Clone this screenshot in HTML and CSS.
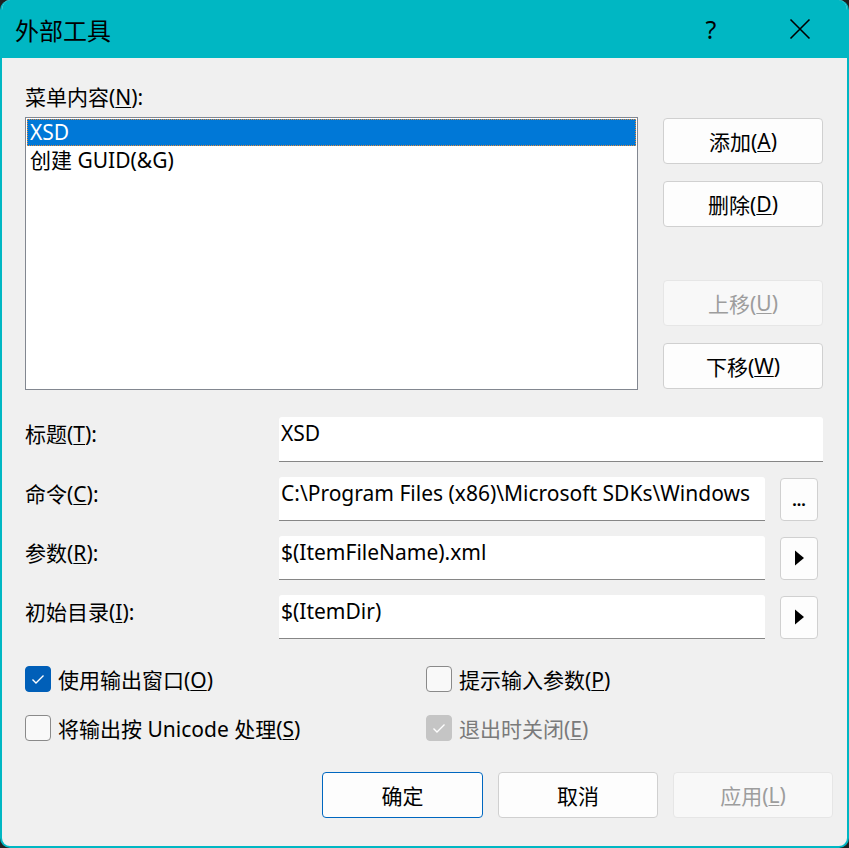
FILE: index.html
```html
<html>
	<head>
		<meta charset="utf-8">
		<title>外部工具</title>
		<link rel="stylesheet" href="styles.css">
	</head>
	<body>
		<div class="dialog">
			<div class="titlebar">
				<span class="title">外部工具</span>
				<span class="help">?</span>
				<span class="close">
					<svg width="22" height="22" viewBox="0 0 22 22"><path d="M1.5 1.5 L20.5 20.5 M20.5 1.5 L1.5 20.5" stroke="#000" stroke-width="1.6" fill="none"/></svg>
				</span>
			</div>

			<div class="content">
				<div class="label">菜单内容(<u>N</u>):</div>

				<div class="menurow">
					<div class="listbox">
						<div class="item selected">XSD</div>
						<div class="item">创建 GUID(&amp;G)</div>
					</div>
					<div class="sidebuttons">
						<button class="btn">添加(<u>A</u>)</button>
						<button class="btn">删除(<u>D</u>)</button>
						<button class="btn disabled spaced">上移(<u>U</u>)</button>
						<button class="btn">下移(<u>W</u>)</button>
					</div>
				</div>

				<div class="fields">
					<div class="label">标题(<u>T</u>):</div>
					<div class="input wide">XSD</div>

					<div class="label">命令(<u>C</u>):</div>
					<div class="input">C:\Program Files (x86)\Microsoft SDKs\Windows</div>
					<button class="btn small dots">...</button>

					<div class="label">参数(<u>R</u>):</div>
					<div class="input">$(ItemFileName).xml</div>
					<button class="btn small">
						<svg width="11" height="16" viewBox="0 0 11 16"><polygon points="1,0.5 10,8 1,15.5" fill="#000"/></svg>
					</button>

					<div class="label">初始目录(<u>I</u>):</div>
					<div class="input">$(ItemDir)</div>
					<button class="btn small">
						<svg width="11" height="16" viewBox="0 0 11 16"><polygon points="1,0.5 10,8 1,15.5" fill="#000"/></svg>
					</button>
				</div>

				<div class="checks">
					<label class="check">
						<span class="box checked"><svg width="24" height="24" viewBox="0 0 24 24"><path d="M6.5 12.5 L10 16 L17.5 8.5" stroke="#fff" stroke-width="1.4" fill="none"/></svg></span>
						<span>使用输出窗口(<u>O</u>)</span>
					</label>
					<label class="check">
						<span class="box"></span>
						<span>提示输入参数(<u>P</u>)</span>
					</label>
					<label class="check">
						<span class="box"></span>
						<span>将输出按 Unicode 处理(<u>S</u>)</span>
					</label>
					<label class="check muted">
						<span class="box checked"><svg width="24" height="24" viewBox="0 0 24 24"><path d="M6.5 12.5 L10 16 L17.5 8.5" stroke="#fff" stroke-width="1.4" fill="none"/></svg></span>
						<span>退出时关闭(<u>E</u>)</span>
					</label>
				</div>

				<div class="footer">
					<button class="btn big default">确定</button>
					<button class="btn big">取消</button>
					<button class="btn big disabled">应用(<u>L</u>)</button>
				</div>
			</div>
		</div>
	</body>
</html>
```

FILE: styles.css
```css
body {
	margin: 0;
	background: #202020;
	font-family: "Noto Sans", "Noto Sans CJK SC", sans-serif;
	font-size: 21px;
	color: #000;
}
u {
	text-underline-offset: 2px;
	text-decoration-thickness: 1px;
}

.dialog {
	height: 848px;
	box-sizing: border-box;
	border: 2px solid #00b7c3;
	border-top: none;
	border-radius: 10px;
	overflow: hidden;
	background: #f0f0f0;
	display: flex;
	flex-direction: column;
}

.titlebar {
	height: 58px;
	flex: none;
	background: #00b7c3;
	display: flex;
	align-items: center;
	padding-left: 13px;
}
.title {
	font-size: 24px;
	flex: 1;
}
.help {
	font-size: 25px;
	width: 40px;
	text-align: center;
	margin-right: 58px;
}
.close {
	display: flex;
	margin-right: 36px;
}

.content {
	padding: 26px 24px 0 23px;
	display: flex;
	flex-direction: column;
}
.label {
	line-height: 26px;
}

.menurow {
	display: flex;
	gap: 25px;
	margin-top: 7px;
}
.listbox {
	width: 612px;
	height: 269px;
	border: 1px solid #828790;
	background: #fff;
	padding: 1px;
}
.item {
	height: 27px;
	line-height: 27px;
	padding-left: 3px;
	margin-bottom: 1px;
}
.item.selected {
	background: #0078d7;
	color: #fff;
	outline: 1px dotted #e08a3c;
	outline-offset: -1px;
}
.sidebuttons {
	display: flex;
	flex-direction: column;
	gap: 17px;
	padding-top: 1px;
}
.sidebuttons .spaced {
	margin-top: 36px;
}

.btn {
	font: inherit;
	color: #000;
	background: #fdfdfd;
	border: 1px solid #d0d0d0;
	border-radius: 4px;
	width: 160px;
	height: 46px;
	padding: 0;
	display: flex;
	align-items: center;
	justify-content: center;
}
.btn.disabled {
	color: #9d9d9d;
	background: #f8f8f8;
	border-color: #e6e6e6;
}
.btn.default {
	border-color: #0067c0;
	width: 161px;
}
.btn.small {
	width: 38px;
	height: 43px;
	margin-left: 15px;
}
.btn.dots {
	font-weight: bold;
	font-size: 16px;
	padding-top: 2px;
}

.fields {
	display: grid;
	grid-template-columns: 254px 486px auto;
	row-gap: 15px;
	margin-top: 27px;
	align-items: center;
}
.fields .label {
	align-self: start;
	padding-top: 4px;
}
.input {
	height: 44px;
	box-sizing: border-box;
	background: #fff;
	border-bottom: 1px solid #868686;
	border-radius: 3px 3px 0 0;
	padding: 3px 0 0 2px;
	line-height: 26px;
	white-space: nowrap;
	overflow: hidden;
}
.input.wide {
	grid-column: 2 / 4;
	height: 45px;
}

.checks {
	display: grid;
	grid-template-columns: 401px auto;
	row-gap: 23px;
	margin-top: 27px;
}
.check {
	display: flex;
	align-items: center;
	gap: 7px;
	height: 26px;
}
.box {
	width: 24px;
	height: 24px;
	border: 1px solid #8a8a8a;
	border-radius: 4px;
	background: #f9f9f9;
	display: flex;
}
.box.checked {
	background: #005fb8;
	border-color: #005fb8;
}
.check.muted {
	color: #7a7a7a;
}
.check.muted .box {
	background: #c5c5c5;
	border-color: #c5c5c5;
}

.footer {
	display: flex;
	justify-content: flex-end;
	gap: 15px;
	margin-top: 31px;
	margin-right: -10px;
}
```
